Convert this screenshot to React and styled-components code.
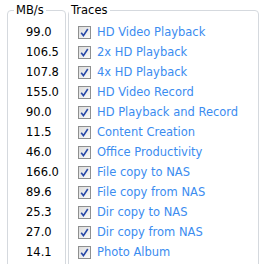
import styled, { createGlobalStyle } from 'styled-components';

const rows = [
  { rate: '99.0', name: 'HD Video Playback' },
  { rate: '106.5', name: '2x HD Playback' },
  { rate: '107.8', name: '4x HD Playback' },
  { rate: '155.0', name: 'HD Video Record' },
  { rate: '90.0', name: 'HD Playback and Record' },
  { rate: '11.5', name: 'Content Creation' },
  { rate: '46.0', name: 'Office Productivity' },
  { rate: '166.0', name: 'File copy to NAS' },
  { rate: '89.6', name: 'File copy from NAS' },
  { rate: '25.3', name: 'Dir copy to NAS' },
  { rate: '27.0', name: 'Dir copy from NAS' },
  { rate: '14.1', name: 'Photo Album' },
];

const GlobalStyle = createGlobalStyle`
  html, body {
    margin: 0;
    background: #fff;
    overflow: hidden;
  }
  body {
    font-family: "DejaVu Sans", Verdana, sans-serif;
    font-size: 11.5px;
  }
`;

const Panels = styled.div`
  display: flex;
  gap: 2px;
  padding: 3px 0 0 7px;
`;

const Group = styled.fieldset`
  margin: 0;
  padding: 0 0 20px;
  border: 1px solid #d5d9de;
  border-radius: 4px;
  width: ${p => p.$width}px;
  box-sizing: border-box;
`;

const Legend = styled.legend`
  margin-left: ${p => p.$offset}px;
  padding: 0 2px;
  line-height: 14px;
  color: #000;
`;

const List = styled.ul`
  list-style: none;
  margin: 0;
  padding: ${p => (p.$indent ? '5px 0 0 18px' : '5px 0 0 9px')};
`;

const Rate = styled.li`
  height: 20px;
  line-height: 20px;
  color: #000;
`;

const Trace = styled.li`
  height: 20px;
  display: flex;
  align-items: center;
  gap: 6px;
  color: #3b8cf0;
`;

const Box = styled.span`
  width: 11px;
  height: 11px;
  border: 1px solid #8e8f8f;
  background: linear-gradient(135deg, #dcdcdc, #fbfbfb);
  display: flex;
  align-items: center;
  justify-content: center;
  flex: none;
`;

function Check() {
  return (
    <Box>
      <svg width="9" height="9" viewBox="0 0 9 9">
        <path d="M1.2 4.8 L3.4 7.6 L7.8 1" fill="none" stroke="#2747a6" strokeWidth="1.6" />
      </svg>
    </Box>
  );
}

export default function App() {
  return (
    <>
      <GlobalStyle />
      <Panels>
        <Group $width={59}>
          <Legend $offset={6}>MB/s</Legend>
          <List $indent>
            {rows.map(r => (
              <Rate key={r.name}>{r.rate}</Rate>
            ))}
          </List>
        </Group>
        <Group $width={191}>
          <Legend $offset={0}>Traces</Legend>
          <List>
            {rows.map(r => (
              <Trace key={r.name}>
                <Check />
                {r.name}
              </Trace>
            ))}
          </List>
        </Group>
      </Panels>
    </>
  );
}
